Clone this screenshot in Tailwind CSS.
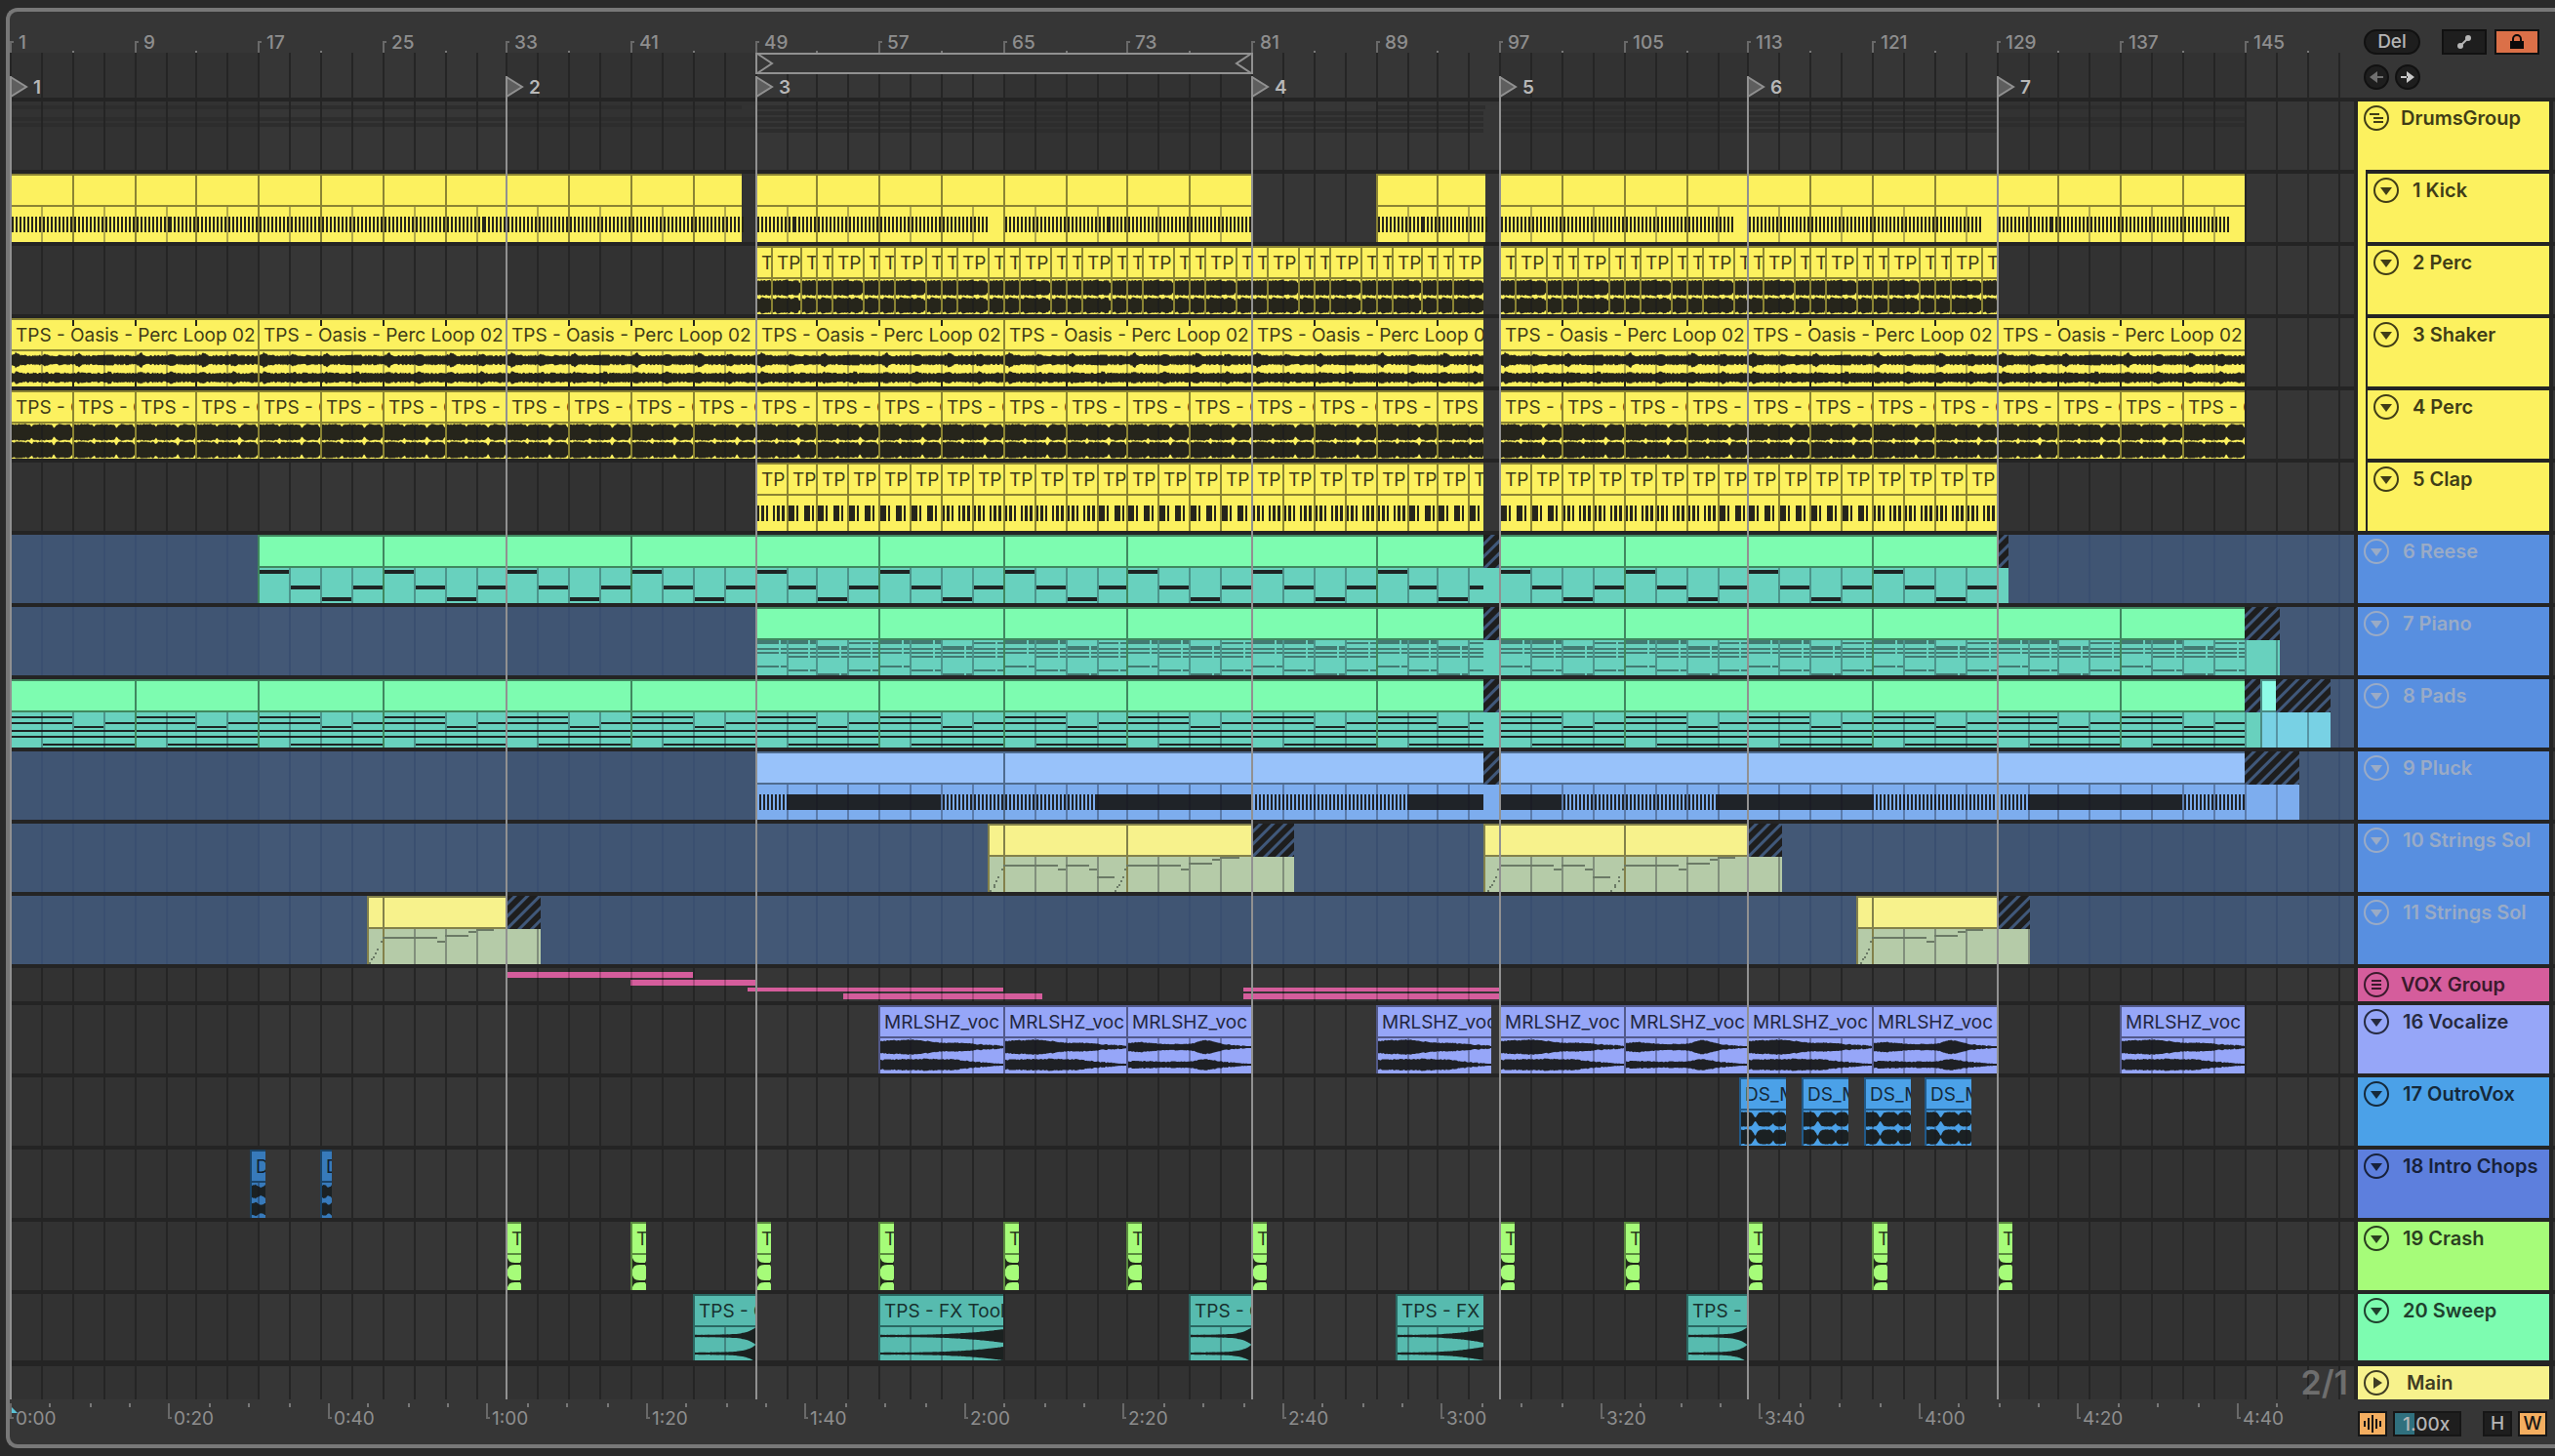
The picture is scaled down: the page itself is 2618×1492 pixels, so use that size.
<!DOCTYPE html>
<html lang="en">
<head>
  <meta charset="UTF-8">
  <meta name="viewport" content="width=device-width, initial-scale=1.0">
  <title>Arrangement</title>
  <script src="https://cdn.jsdelivr.net/npm/@tailwindcss/browser@4"></script>
</head>
<body class="bg-[#2a2a2a] pt-2 pb-2 pl-[6px] font-[Inter,'Liberation_Sans',sans-serif] text-[19px] select-none">
  <main class="rounded-l-[12px] border-4 border-r-0 border-[#787878] bg-[#363636] overflow-hidden">

    <!-- rulers + transport buttons -->
    <div class="relative" id="arrangement">
      <header class="flex h-[88px]">
        <div class="flex-1 min-w-0 flex flex-col">
          <div id="barRuler" class="relative h-[42px] font-medium text-[#8e8e8e] overflow-hidden"></div>
          <div data-grid="plain" class="relative flex-1"></div>
        </div>
        <div class="w-[206px] pl-[10px] pt-[18px] flex flex-col gap-[10px]">
          <div class="flex items-center">
            <button class="w-[58px] h-[26px] rounded-full border-2 border-[#111] bg-[#1e1e1e] text-[#b5b5b5] font-medium leading-[22px]">Del</button>
            <button aria-label="Automation mode" class="ml-[22px] w-[46px] h-[26px] border-2 border-[#111] bg-[#1e1e1e] flex items-center justify-center">
              <svg width="16" height="16" viewBox="0 0 16 16" fill="#b5b5b5"><circle cx="4" cy="12" r="3"/><circle cx="12" cy="4" r="3"/><path d="M4 12L12 4" stroke="#b5b5b5" stroke-width="2"/></svg>
            </button>
            <button aria-label="Lock envelopes" class="ml-2 w-[46px] h-[26px] border-2 border-[#111] bg-[#db7048] flex items-center justify-center">
              <svg width="14" height="16" viewBox="0 0 14 16"><path d="M3 8V5a4 4 0 0 1 8 0v3" fill="none" stroke="#0a0a0a" stroke-width="2"/><path d="M0 7h14v8H0z" fill="#0a0a0a"/></svg>
            </button>
          </div>
          <div class="flex gap-[6px]">
            <button aria-label="Previous locator" class="size-[26px] rounded-full border-2 border-[#111] bg-[#1e1e1e] flex items-center justify-center">
              <svg width="14" height="12" viewBox="0 0 14 12" fill="#707070"><path d="M0 6l8-6v12zM7 5h7v2H7z"/></svg>
            </button>
            <button aria-label="Next locator" class="size-[26px] rounded-full border-2 border-[#111] bg-[#1e1e1e] flex items-center justify-center">
              <svg width="14" height="12" viewBox="0 0 14 12" fill="#c8c8c8"><path d="M14 6L6 0v12zM0 5h7v2H0z"/></svg>
            </button>
          </div>
        </div>
      </header>

      <section id="tracks" class="bg-[#242424] pt-1"></section>

      <div id="markers" class="absolute inset-y-0 left-0 right-[206px] pointer-events-none"></div>
    </div>

    <footer class="flex h-[42px]">
      <div id="timeRuler" class="relative flex-1 min-w-0 text-[#8e8e8e] overflow-hidden"></div>
      <div class="w-[206px] pl-1 pt-2 flex items-start">
        <button aria-label="Optimize width" class="w-[30px] h-[26px] border-2 border-[#161616] bg-[#f4ae60] flex items-center justify-center">
          <svg width="18" height="18" viewBox="0 0 18 18" fill="#161616"><path d="M0 6h2v6H0zM4 3h2v12H4zM8 0h2v18H8zM12 4h2v10h-2zM16 6h2v6h-2z"/></svg>
        </button>
        <input aria-label="Zoom factor" value="1.00x" class="ml-[6px] w-[70px] h-[26px] border-2 border-[#161616] bg-[linear-gradient(90deg,#30707e_20px,#1e1e1e_20px)] pl-2 font-medium text-[#b5b5b5] leading-[22px] outline-none">
        <button class="ml-[22px] w-[30px] h-[26px] border-2 border-[#161616] bg-[#1e1e1e] font-medium text-[#b5b5b5] leading-[22px]">H</button>
        <button class="ml-[6px] w-[30px] h-[26px] border-2 border-[#161616] bg-[#f4ae60] font-medium text-[#161616] leading-[22px]">W</button>
      </div>
    </footer>
  </main>

<script>
  const BARS = 151.06        // bars visible in the lanes
  const LOCATORS = [1, 33, 49, 81, 97, 113, 129]

  let unit = 16
  // everything sits on a 2px raster
  const px = bar => 2 * Math.round((bar - 1) * unit / 2)
  const rect = (x, y, w, h, fill) => `<rect x="${x}" y="${y}" width="${w}" height="${h}" fill="${fill}"/>`
  const noise = n => { const s = Math.sin(n * 127.1 + 11.7) * 43758.5453; return s - Math.floor(s) }
  const every = (from, to, step) => {
    const out = []
    for (let b = from; b < to; b += step) out.push([b, Math.min(b + step, to)])
    return out
  }

  const SKIN = {
    yellow:  { box: 'border-[#8b8433] bg-[#fcf15f]', head: 'border-[#8b8433] bg-[#fcf15f] text-[#3f3c18]', ink: '#26251b' },
    green:   { box: 'border-[#40875f] bg-[#68d1be]', head: 'border-[#40875f] bg-[#7dfcb0]', ink: '#1e2424' },
    aqua:    { box: 'border-[#4b8a83] bg-[#78d1e4]', head: 'border-[#4b8a83] bg-[#8efce6]', ink: '#1e2424' },
    sky:     { box: 'border-[#4e6b8e] bg-[#7dadee]', head: 'border-[#4e6b8e] bg-[#98c2fa]', ink: '#1f2328' },
    cream:   { box: 'border-[#83814b] bg-[#b5cba8]', head: 'border-[#83814b] bg-[#f7f28c]', ink: '#6b7a66' },
    violet:  { box: 'border-[#52598a] bg-[#96a6f8]', head: 'border-[#52598a] bg-[#96a6f8] text-[#23273f]', ink: '#1e2024' },
    blue:    { box: 'border-[#215a8a] bg-[#4ba1e8]', head: 'border-[#215a8a] bg-[#4ba1e8] text-[#15293a]', ink: '#1b2123' },
    navy:    { box: 'border-[#1a4468] bg-[#377abb]', head: 'border-[#1a4468] bg-[#377abb] text-[#10202f]', ink: '#1b2123' },
    lime:    { box: 'border-[#5a8b3f] bg-[#a6fc79]', head: 'border-[#5a8b3f] bg-[#a6fc79] text-[#2a3f1f]', ink: '#22291c' },
    teal:    { box: 'border-[#2a6862] bg-[#57bbaf]', head: 'border-[#2a6862] bg-[#57bbaf] text-[#17322f]', ink: '#1b2120' },
  }

  // stereo waveform, env(t, x) gives the half height for each channel
  function wave(a, b, env, ink) {
    const x0 = px(a) + 2, x1 = px(b)
    let d = ''
    for (const [c, cy] of [[0, 43], [1, 61]]) {
      let top = '', bottom = ''
      for (let x = x0; x <= x1; x++) {
        const t = (x - x0) / (x1 - x0)
        const h = Math.min(9, Math.max(1, env(t, x - x0, c, noise(x - x0 + c * 500))))
        top += `${x} ${(cy - h).toFixed(1)} `
        bottom = `${x} ${(cy + h).toFixed(1)} ` + bottom
      }
      d += `M${top}L${bottom}Z`
    }
    return `<path d="${d}" fill="${ink}"/>`
  }

  function kickNotes([a, b]) {
    let s = ''
    for (let beat = a; beat < b - 0.05; beat += 0.25) {
      if ([64, 112, 128, 144].includes(Math.floor(beat))) continue
      s += rect(px(beat) + 2, 44, 2, 16, '#26251b')
    }
    return s
  }
  function clapNotes([a, b]) {
    const x = px(a), dense = (a - 41) % 20 < 10
    const hits = dense ? [[2, 2], [6, 3], [11, 2], [18, 2], [22, 3], [27, 3]] : [[2, 6], [10, 2], [18, 6], [26, 2]]
    return hits.filter(h => x + h[0] + h[1] < px(b)).map(h => rect(x + h[0], 44, h[1], 16, '#26251b')).join('')
  }
  // notes: [fromBar, toBar, y, height] inside an 8 bar clip
  const midi = (notes, ink) => ([a, b]) => notes.map(([f, t, y, h]) => {
    const x0 = px(a + f) + 2, x1 = Math.min(px(a + t), px(b))
    return x1 > x0 ? rect(x0, y, x1 - x0, h, ink) : ''
  }).join('')
  const REESE = [[0, 2, 36, 4], [2, 4, 52, 4], [4, 6, 64, 4], [6, 8, 52, 4]]
  const PADS = [[0, 4, 38, 2], [0, 4, 44, 2], [6, 8, 44, 2], [4, 6, 48, 2], [0, 8, 52, 2], [0, 8, 58, 2], [2, 8, 66, 2]]
  const PIANO = [
    [0, 2, 34, 4], [2, 4, 34, 4], [4, 6, 40, 4], [6, 8, 36, 2],
    [0, 2, 42, 2], [2, 4, 42, 2], [6, 8, 42, 2],
    [0, 2, 46, 2], [2, 4, 46, 2], [4, 6, 46, 2], [6, 8, 46, 2],
    [2, 4, 50, 2], [4, 6, 50, 2], [6, 8, 50, 2],
    [0, 2, 60, 2], [2, 4, 64, 2], [6, 8, 64, 2], [4, 6, 68, 2],
  ].flatMap(([f, t, y, h]) => [[f, t - 0.5, y, h], [t - 0.5, t, y, h]])

  function pluckNotes([a, b]) {
    let s = ''
    for (let k = a; k < b; k++) {
      const x0 = px(k), x1 = px(Math.min(k + 1, b))
      if ((k - 41) % 20 >= 10) s += rect(x0, 44, x1 - x0, 16, '#1f2328')
      else for (let x = Math.ceil(x0 / 4) * 4; x < x1; x += 4) s += rect(x, 44, 2, 16, '#1f2328')
    }
    return s
  }

  const rise = b => [[.2, 68], [.33, 64], [.45, 62], [.58, 58], [.7, 54], [.85, 46]].map(([o, y]) => [b + o, b + o + .12, y])
  const phraseA = b => [...rise(b - 1), [b, b + 3.5, 42], [b + 3.5, b + 4, 46], [b + 4, b + 5.5, 42], [b + 5.5, b + 6, 46], [b + 6, b + 7.15, 54]]
  const phraseB = b => [...rise(b - 1), [b, b + 3.5, 42], [b + 3.5, b + 4, 46], [b + 4, b + 5.5, 40], [b + 5.5, b + 6, 36], [b + 6, b + 7.2, 34]]
  const strings = list => () => list.map(([f, t, y]) => rect(px(f), y, Math.max(2, px(t) - px(f)), 2, '#6b7a66')).join('')

  const bump = (t, c, w) => Math.exp(-((t - c) ** 2) / (w * w))
  const block = (t, c, w) => Math.exp(-(((t - c) / w) ** 6))
  const ENV = {
    perc2: (t, x, c, n) => 6 + .8 * Math.abs(Math.sin(x / 3)) + n * 1.8 - (t > .95 ? 2 : 0),
    shaker: (t, x, c, n) => 3.6 + n * 2 + 3 * bump((x % 64) / 64, .07, .04) * (c ? .4 : 1) + 1.6 * bump((x % 64) / 64, .55, .04),
    perc4: (t, x, c, n) => 7.3 + n * 1.4 - 3.2 * bump(t, .7, .025) - 2 * bump(t, .33, .02) - 3 * bump(t, 1, .02),
    voxA: (t, x, c, n) => c ? 4.3 + n * 1.2 + bump(t, .35, .25) - (t > .6 ? (t - .6) * 11 : 0)
      : 3 + n * 1.2 + 3.6 * bump(t, .28, .16) + 2.4 * bump(t, .05, .15) - (t > .65 ? (t - .65) * 6 : 0) + .8 * bump(t, .6, .15),
    voxB: (t, x, c, n) => 2.6 + n + 1.8 * bump(t, .1, .12) * (c ? .3 : 1) + (c ? 2.4 : 4) * bump(t, .63, .09) - (t > .75 ? (t - .75) * 10 : 0),
    outro: (t, x, c, n) => Math.max(1.5, 7 * Math.max(block(t, .1, .19), block(t, .53, .19), block(t, .86, .15)) + n * .8),
    intro: (t, x, c, n) => 5 + n + 1.5 * Math.sin(t * 7),
    crash: (t, x) => 1 + 5 * Math.exp(-x / 1.8) + (t > .95 ? 2 : 0),
    sweep: (t, x, c, n) => 1 + 5.8 * t * t * t + n * .3,
    sweepFast: (t, x, c, n) => 1 + 1.6 * t * t + 6 * t ** 8 + n * .3,
  }
  const waves = (env, ink) => ([a, b]) => wave(a, b, ENV[env], ink)

  const makeClips = (step, skin, label, ranges) => ranges.flatMap(([a, b]) => every(a, b, step)).map(r => ({ r, skin, label }))
  const perc2 = [[49, 96], [97, 129]].flatMap(([a, b]) => {
    const out = []
    for (let k = a; k < b; k += 4) out.push([k, k + 1], [k + 1, Math.min(k + 3, b)], [k + 3, k + 4])
    return out.filter(([f]) => f < b)
  }).map(r => ({ r, skin: 'yellow', label: r[1] - r[0] > 1 ? 'TP' : 'T' }))
  const BREAK = { a: 96, b: 97, skin: 'green' }

  const FROZEN = 'bg-[#588fe0] text-[#9aabc6]'
  const YELLOW = 'bg-[#fcf15f] text-[#403d17]'
  const TRACKS = [
    { name: 'DrumsGroup', head: YELLOW, icon: 'group', overview: [
      [1, 48.2, 4, 4], [49, 81, 4, 4], [89, 96.1, 4, 4], [97, 145, 4, 4], [49, 96, 10, 4], [97, 129, 10, 4],
      [1, 96, 16, 4], [97, 145, 16, 4], [1, 96, 22, 4], [97, 145, 22, 4], [49, 96, 28, 4], [97, 129, 28, 4]], overviewFill: '#2d2d2d' },
    { name: '1 Kick', head: YELLOW, child: true, notes: kickNotes,
      clips: makeClips(4, 'yellow', '', [[1, 48.2], [49, 81], [89, 96.1], [97, 145]]) },
    { name: '2 Perc', head: YELLOW, child: true, notes: waves('perc2', '#26251b'), clips: perc2 },
    { name: '3 Shaker', head: YELLOW, child: true, notes: waves('shaker', '#26251b'), loopTicks: true,
      clips: makeClips(16, 'yellow', 'TPS - Oasis - Perc Loop 02', [[1, 96], [97, 145]]) },
    { name: '4 Perc', head: YELLOW, child: true, notes: waves('perc4', '#26251b'),
      clips: makeClips(4, 'yellow', 'TPS - O', [[1, 96], [97, 145]]) },
    { name: '5 Clap', head: YELLOW, child: true, notes: clapNotes,
      clips: makeClips(2, 'yellow', 'TP', [[49, 96], [97, 129]]) },
    { name: '6 Reese', head: FROZEN, frozen: true, notes: midi(REESE, '#1e2424'),
      clips: makeClips(8, 'green', '', [[17, 96], [97, 129]]), tails: [BREAK, { a: 129, b: 129.75, skin: 'green' }] },
    { name: '7 Piano', head: FROZEN, frozen: true, notes: midi(PIANO, '#427a72'),
      clips: makeClips(8, 'green', '', [[49, 96], [97, 145]]), tails: [BREAK, { a: 145, b: 147.25, skin: 'green' }] },
    { name: '8 Pads', head: FROZEN, frozen: true, notes: midi(PADS, '#1e2424'),
      clips: makeClips(8, 'green', '', [[1, 96], [97, 145]]).concat({ r: [146, 147], skin: 'aqua', label: '', empty: true }),
      tails: [BREAK, { a: 145, b: 146, skin: 'green' }, { a: 147, b: 150.6, skin: 'aqua' }] },
    { name: '9 Pluck', head: FROZEN, frozen: true, notes: pluckNotes,
      clips: [[49, 65], [65, 96], [97, 145]].map(r => ({ r, skin: 'sky', label: '' })),
      tails: [{ a: 96, b: 97, skin: 'sky' }, { a: 145, b: 148.6, skin: 'sky' }] },
    { name: '10 Strings Sol', head: FROZEN, frozen: true,
      extra: strings([...phraseA(65), ...phraseB(73), ...phraseA(97), ...phraseB(105)]),
      clips: [[64, 65], [65, 73], [73, 81], [96, 97], [97, 105], [105, 113]].map(r => ({ r, skin: 'cream', label: '' })),
      tails: [{ a: 81, b: 83.7, skin: 'cream' }, { a: 113, b: 115.2, skin: 'cream' }] },
    { name: '11 Strings Sol', head: FROZEN, frozen: true, extra: strings([...phraseB(25), ...phraseB(121)]),
      clips: [[24, 25], [25, 33], [120, 121], [121, 129]].map(r => ({ r, skin: 'cream', label: '' })),
      tails: [{ a: 33, b: 35.2, skin: 'cream' }, { a: 129, b: 131.15, skin: 'cream' }] },
    { name: 'VOX Group', head: 'bg-[#d55d9c] text-[#3a1a2c]', icon: 'menu', small: true, overviewFill: '#d55d9c', overview: [
      [33, 45, 4, 6], [41, 49, 12, 6], [48.5, 65, 20, 4], [54.7, 67.5, 26, 6], [80.5, 97, 20, 4], [80.5, 97, 26, 6]] },
    { name: '16 Vocalize', head: 'bg-[#96a6f8] text-[#262a40]',
      clips: [[57, 65, 'voxA'], [65, 73, 'voxA'], [73, 81, 'voxB'], [89, 96.5, 'voxA'], [97, 105, 'voxA'], [105, 113, 'voxB'], [113, 121, 'voxA'], [121, 129, 'voxB'], [137, 145, 'voxA']]
        .map(([a, b, env]) => ({ r: [a, b], env, skin: 'violet', label: 'MRLSHZ_voc' })) },
    { name: '17 OutroVox', head: 'bg-[#4ba1e8] text-[#15293a]',
      clips: [112.45, 116.45, 120.45, 124.45].map(a => ({ r: [a, a + 3], env: 'outro', skin: 'blue', label: 'DS_M' })) },
    { name: '18 Intro Chops', head: 'bg-[#5d7fdd] text-[#17213a]',
      clips: [[16.5, 17.5], [21, 21.8]].map(r => ({ r, env: 'intro', skin: 'navy', label: 'D' })) },
    { name: '19 Crash', head: 'bg-[#a6fc79] text-[#2a3f1f]',
      clips: [33, 41, 49, 57, 65, 73, 81, 97, 105, 113, 121, 129].map(a => ({ r: [a, a + 1], env: 'crash', skin: 'lime', label: 'T' })) },
    { name: '20 Sweep', head: 'bg-[#7dfcb0] text-[#1f402d]', last: true,
      clips: [[45, 49, 'sweepFast', 'TPS - O'], [57, 65, 'sweep', 'TPS - FX Tool'], [77, 81, 'sweepFast', 'TPS - O'], [90.25, 96, 'sweep', 'TPS - FX'], [109, 113, 'sweepFast', 'TPS - O']]
        .map(([a, b, env, label]) => ({ r: [a, b], env, skin: 'teal', label })) },
    { name: 'Main', head: 'bg-[#f7f28c] text-[#3f3d24]', icon: 'play', small: true },
  ]

  const ICONS = {
    fold: '<path d="M7 10h12l-6 8z" fill="currentColor"/>',
    play: '<path d="M10 7v12l9-6z" fill="currentColor"/>',
    menu: '<path d="M8 9h10M8 13h10M8 17h10" stroke="currentColor" stroke-width="2"/>',
    group: '<path d="M6 9h10M10 13h10M10 17h10" stroke="currentColor" stroke-width="2"/>',
  }

  function gridSvg(kind) {
    const [light, dark, line] = kind === 'frozen' ? ['#435876', '#405573', '#3a4f70'] : ['#363636', '#323232', '#252525']
    let s = ''
    for (let b = 1; b < BARS + 1; b += 16) s += rect(px(b), 0, px(b + 16) - px(b), '100%', (b - 1) % 32 ? light : dark)
    for (let b = 1; b < BARS + 1; b += 2) s += rect(px(b), 0, 2, '100%', line)
    return `<svg class="absolute inset-0 size-full">${s}</svg>`
  }

  function laneHtml(t) {
    let html = gridSvg(t.frozen ? 'frozen' : 'plain'), over = ''
    const lines = (a, b) => {
      for (let g = Math.ceil((a - 1) / 2) * 2 + 1; g < b; g += 2) if (g > a) over += rect(px(g), 34, 2, 36, 'rgba(20,20,30,.32)')
    }
    for (const c of t.clips || []) {
      const [a, b] = c.r, s = SKIN[c.skin]
      html += `<div class="absolute inset-y-0 border-t-2 border-l-2 ${s.box}" style="left:${px(a)}px;width:${px(b) - px(a)}px">
        <div class="h-[32px] border-b-2 pl-1 leading-[31px] whitespace-nowrap overflow-hidden ${s.head}">${c.label}</div></div>`
      if (c.env) over += wave(a, b, ENV[c.env], s.ink)
      else if (t.notes && !c.empty) over += t.notes(c.r)
      lines(a, b)
      if (t.loopTicks) for (let g = a + 4; g < b; g += 4) over += rect(px(g), 2, 2, 6, '#26251b') + rect(px(g), 60, 2, 10, '#26251b')
    }
    for (const { a, b, skin } of t.tails || []) {
      html += `<div class="absolute inset-y-0 pt-[34px] bg-clip-content ${SKIN[skin].box}" style="left:${px(a)}px;width:${px(b) - px(a)}px"></div>
        <div class="absolute top-0 h-[34px] bg-[repeating-linear-gradient(135deg,#1e1e1e_0px,#1e1e1e_5px,#40587a_6px,#40587a_8px,#1e1e1e_9px)]" style="left:${px(a)}px;width:${px(b) - px(a)}px"></div>`
      lines(a - .01, b)
    }
    for (const [a, b, y, h] of t.overview || []) {
      over += rect(px(a), y, px(b) - px(a), h, t.overviewFill)
      for (let g = Math.ceil((a - 1) / 2) * 2 + 1; g < b; g += 2) over += rect(px(g), y, 2, h, 'rgba(0,0,0,.2)')
    }
    if (t.extra) over += t.extra()
    return html + `<svg class="absolute inset-0 size-full">${over}</svg>`
  }

  const tracks = document.getElementById('tracks')
  tracks.innerHTML = TRACKS.map((t, i) => {
    const height = t.small ? 'h-[34px]' : t.last ? 'h-[68px]' : 'h-[70px]'
    const gap = t.last ? 'mb-[6px]' : 'mb-1'
    const inset = t.child ? 'border-l-2 border-[#242424]' : ''
    const strip = t.child ? '<span class="w-2 -mt-1 bg-[#fcf15f]"></span>' : ''
    const pad = t.name === 'Main' ? 'gap-[18px]' : t.icon ? 'gap-3' : 'gap-[14px]'
    return `<div class="flex ${height} ${gap}">
      <div data-lane="${i}" class="relative flex-1 min-w-0 overflow-hidden"></div>
      <div class="w-[206px] pl-1 flex">
        ${strip}
        <div class="${t.child ? 'w-[188px]' : 'w-[196px]'} ${inset} ${t.head}">
          <div class="flex items-center h-[34px] pl-[6px] text-[20px] font-semibold whitespace-nowrap ${pad}">
            <button aria-label="Fold ${t.name}"><svg class="block size-[26px]" viewBox="0 0 26 26"><circle cx="13" cy="13" r="12" fill="none" stroke="currentColor" stroke-width="2"/>${ICONS[t.icon || 'fold']}</svg></button>
            <span>${t.name}</span>
          </div>
        </div>
        <span class="ml-1 w-[2px] bg-[#363636]"></span>
      </div>
    </div>`
  }).join('')

  function render() {
    const lanes = document.querySelectorAll('[data-lane]')
    unit = lanes[0].clientWidth / BARS
    lanes.forEach(el => { el.innerHTML = laneHtml(TRACKS[el.dataset.lane]) })
    lanes[lanes.length - 1].innerHTML += '<span class="absolute right-[6px] top-0 text-[34px] leading-[34px] font-semibold text-[#6e6e6e]">2/1</span>'
    document.querySelectorAll('[data-grid]').forEach(el => { el.innerHTML = gridSvg(el.dataset.grid) })

    let bars = ''
    for (let b = 1; b < BARS + 1; b += 4) {
      const x = px(b)
      if ((b - 1) % 8) bars += `<i class="absolute bottom-0 w-[2px] h-[2px] bg-[#787878]" style="left:${x}px"></i>`
      else bars += `<i class="absolute bottom-0 w-1 h-3 border-l-2 border-t-2 border-[#696969]" style="left:${x}px"></i>
        <span class="absolute top-5 leading-[23px]" style="left:${x + 9}px">${b}</span>`
    }
    document.getElementById('barRuler').innerHTML = bars

    let time = '<svg class="absolute left-0 top-[2px]" width="8" height="8"><path d="M0 0l8 8H0z" fill="#5bc2d6"/></svg>'
    for (let s = 0; s <= 285; s += 5) {
      const x = px(1 + s * 123 / 240)
      if (s % 20) time += `<i class="absolute top-0 w-[2px] h-1 bg-[#787878]" style="left:${x}px"></i>`
      else time += `<i class="absolute top-0 w-1 h-4 border-l-2 border-b-2 border-[#696969]" style="left:${x}px"></i>
        <span class="absolute top-1 leading-[23px]" style="left:${x + 6}px">${Math.floor(s / 60)}:${String(s % 60).padStart(2, '0')}</span>`
    }
    document.getElementById('timeRuler').innerHTML = time

    const loop = px(81) - px(49) + 2
    document.getElementById('markers').innerHTML = `
      <div class="absolute top-[42px] h-[22px]" style="left:${px(49)}px;width:${loop}px">
        <svg class="size-full" fill="none" stroke="#919191" stroke-width="2">
          <rect x="1" y="1" width="${loop - 2}" height="20" fill="#363636"/>
          <path d="M2 1l15 10l-15 10M${loop - 2} 1l-15 10l15 10"/>
        </svg>
      </div>` + LOCATORS.map((b, i) => `
      <div class="absolute top-[66px] bottom-0 border-l-2 border-[#919191]" style="left:${px(b)}px">
        <svg class="absolute -left-[2px] top-0" width="20" height="22"><path d="M1 1l16 10l-16 10z" fill="#5e5e5e" stroke="#919191" stroke-width="2"/></svg>
        <span class="absolute left-[22px] top-0 leading-[23px] font-semibold text-[#b8b8b8]">${i + 1}</span>
      </div>`).join('')
  }
  render()
  // redraw whenever the lanes change width
  new ResizeObserver(render).observe(document.querySelector('[data-lane]'))
</script>
</body>
</html>
